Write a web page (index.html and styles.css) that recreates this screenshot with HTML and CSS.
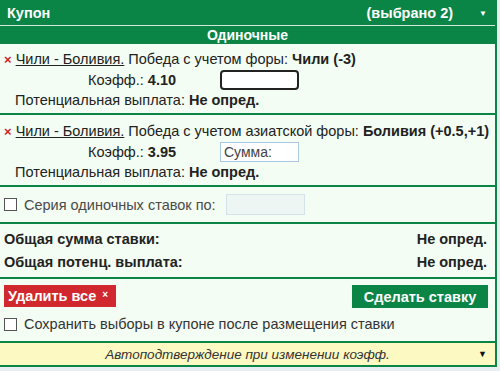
FILE: index.html
```html
<!DOCTYPE html>
<html lang="ru">
<head>
    <meta charset="UTF-8">
    <title>Купон</title>
    <link rel="stylesheet" href="styles.css">
</head>
<body>

    <!-- Bet slip -->
    <div class="coupon">

        <!-- Header -->
        <div class="coupon-header">
            <span>Купон</span>
            <span class="selected">(выбрано 2) <span class="arrow">&#9660;</span></span>
        </div>
        <div class="coupon-type">Одиночные</div>

        <!-- Selections -->
        <div class="bet first">
            <div class="bet-title">
                <span class="remove">&times;</span>
                <span class="match">Чили - Боливия.</span> Победа с учетом форы: <b>Чили (-3)</b>
            </div>
            <div class="bet-odds">
                <span class="odds-label">Коэфф.: <b>4.10</b></span>
                <input type="text" class="stake focused" value="">
            </div>
            <div class="bet-payout">Потенциальная выплата: <b>Не опред.</b></div>
        </div>

        <div class="bet">
            <div class="bet-title">
                <span class="remove">&times;</span>
                <span class="match">Чили - Боливия.</span> Победа с учетом азиатской форы: <b>Боливия (+0.5,+1)</b>
            </div>
            <div class="bet-odds">
                <span class="odds-label">Коэфф.: <b>3.95</b></span>
                <input type="text" class="stake" placeholder="Сумма:">
            </div>
            <div class="bet-payout">Потенциальная выплата: <b>Не опред.</b></div>
        </div>

        <!-- Series -->
        <div class="series">
            <span class="checkbox"></span>
            <span class="series-label">Серия одиночных ставок по:</span>
            <input type="text" class="series-input" disabled>
        </div>

        <!-- Totals -->
        <div class="totals">
            <div class="total-row"><span>Общая сумма ставки:</span><span>Не опред.</span></div>
            <div class="total-row"><span>Общая потенц. выплата:</span><span>Не опред.</span></div>
        </div>

        <!-- Actions -->
        <div class="actions">
            <div class="buttons">
                <button class="btn-clear">Удалить все <span class="small-x">&times;</span></button>
                <button class="btn-place">Сделать ставку</button>
            </div>
            <div class="keep">
                <span class="checkbox"></span>
                <span>Сохранить выборы в купоне после размещения ставки</span>
            </div>
        </div>

        <!-- Auto confirm -->
        <div class="auto-confirm">
            <span>Автоподтверждение при изменении коэфф.</span>
            <span class="arrow-dark">&#9660;</span>
        </div>
    </div>

</body>
</html>
```

FILE: styles.css
```css
/* Global Styles */
body {
    margin: 0;
    padding: 0;
    background: #e9eef3;
    font-family: 'Liberation Sans', Arial, sans-serif;
    font-size: 14.5px;
    color: #222;
}

/* Coupon container */
.coupon {
    width: 495px;
    background: #f3fdf3;
    border-right: 2px solid #0b8546;
}

/* Header */
.coupon-header {
    background: #0b8546;
    color: #fff;
    font-weight: bold;
    font-size: 14.5px;
    height: 25px;
    display: flex;
    justify-content: space-between;
    align-items: center;
    padding: 0 8px 0 7px;
    border-bottom: 1px solid #cfe9da;
}

.coupon-header .arrow {
    font-size: 8px;
    margin-left: 22px;
    vertical-align: 2px;
}

.coupon-type {
    background: #0b8546;
    color: #fff;
    font-weight: bold;
    font-size: 14px;
    text-align: center;
    height: 18px;
    line-height: 19px;
}

/* Single bet */
.bet {
    padding: 6px 0 3px 0;
    border-bottom: 2px solid #0b8546;
}

.bet.first {
    padding-top: 5px;
}

.bet-title {
    padding-left: 4px;
    line-height: 20px;
}

.remove {
    color: #d0262c;
    font-weight: bold;
    font-size: 13px;
}

.match {
    text-decoration: underline;
}

.bet-odds {
    display: flex;
    align-items: center;
    height: 20px;
}

.odds-label {
    width: 132px;
    padding-left: 88px;
}

.stake {
    width: 79px;
    height: 20px;
    box-sizing: border-box;
    border: 1px solid #a9c8e0;
    background: #fff;
    font-family: inherit;
    font-size: 14px;
    padding: 0 3px;
    color: #333;
}

.stake::placeholder {
    color: #444;
}

.stake.focused {
    border: 2px solid #222;
    border-radius: 4px;
}

.bet-payout {
    padding-left: 15px;
    line-height: 20px;
}

/* Series */
.series {
    display: flex;
    align-items: center;
    padding: 7px 4px;
    border-bottom: 2px solid #0b8546;
    color: #4a4a4a;
}

.checkbox {
    width: 11px;
    height: 11px;
    border: 1px solid #555;
    background: #fff;
    margin-right: 7px;
    display: inline-block;
}

.series-input {
    width: 79px;
    height: 21px;
    box-sizing: border-box;
    margin-left: 10px;
    border: 1px solid #d4e2ea;
    background: #eef6f4;
}

/* Totals */
.totals {
    padding: 4px 8px 3px 4px;
    font-weight: bold;
    border-bottom: 2px solid #0b8546;
}

.total-row {
    display: flex;
    justify-content: space-between;
    line-height: 23px;
}

/* Buttons */
.actions {
    padding: 6px 7px 9px 4px;
}

.buttons {
    display: flex;
    justify-content: space-between;
    align-items: flex-start;
}

.btn-clear {
    background: #d0282e;
    color: #fff;
    border: none;
    font-family: inherit;
    font-weight: bold;
    font-size: 14.5px;
    height: 22px;
    width: 112px;
    padding: 0 0 0 4px;
    text-align: left;
}

.small-x {
    font-size: 10px;
    vertical-align: 3px;
    margin-left: 2px;
}

.btn-place {
    background: #0b8546;
    color: #fff;
    border: none;
    font-family: inherit;
    font-weight: bold;
    font-size: 14.5px;
    height: 23px;
    width: 136px;
}

.keep {
    display: flex;
    align-items: center;
    margin-top: 8px;
    color: #333;
}

/* Auto confirm bar */
.auto-confirm {
    background: #fcf9c3;
    border-top: 2px solid #0b8546;
    border-bottom: 2px solid #0b8546;
    height: 22px;
    display: flex;
    align-items: center;
    justify-content: center;
    position: relative;
    font-style: italic;
    font-size: 13.5px;
    color: #333;
}

.arrow-dark {
    position: absolute;
    right: 8px;
    font-style: normal;
    font-size: 9px;
    color: #111;
}
```
